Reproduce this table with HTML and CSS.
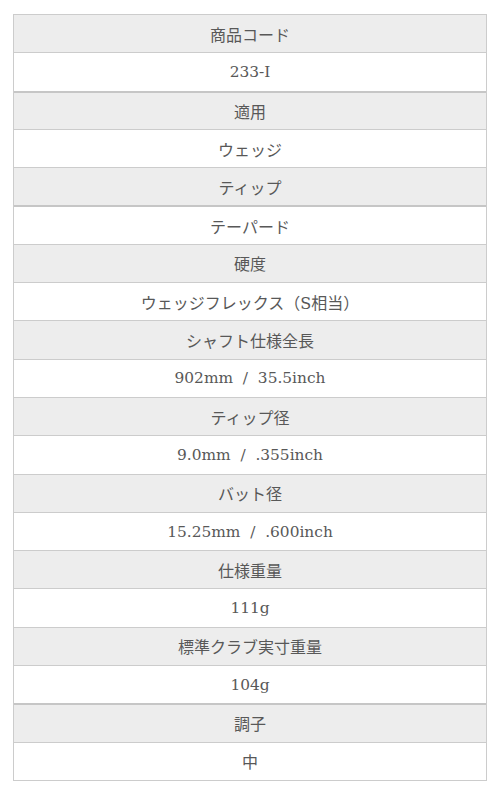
FILE: index.html
```html
<!DOCTYPE html>
<html lang="ja">
<head>
<meta charset="utf-8">
<title>スペック</title>
<link rel="stylesheet" href="styles.css">
</head>
<body>
<div class="spec">
  <div class="row head">商品コード</div>
  <div class="row num">233-I</div>
  <div class="row head thick">適用</div>
  <div class="row">ウェッジ</div>
  <div class="row head">ティップ</div>
  <div class="row thick">テーパード</div>
  <div class="row head">硬度</div>
  <div class="row">ウェッジフレックス（S相当）</div>
  <div class="row head">シャフト仕様全長</div>
  <div class="row num">902mm&nbsp; / &nbsp;35.5inch</div>
  <div class="row head">ティップ径</div>
  <div class="row num">9.0mm&nbsp; / &nbsp;.355inch</div>
  <div class="row head">バット径</div>
  <div class="row num">15.25mm&nbsp; / &nbsp;.600inch</div>
  <div class="row head">仕様重量</div>
  <div class="row num">111g</div>
  <div class="row head">標準クラブ実寸重量</div>
  <div class="row num">104g</div>
  <div class="row head thick">調子</div>
  <div class="row">中</div>
</div>
</body>
</html>
```

FILE: styles.css
```css
html, body {
  margin: 0;
  padding: 0;
  background: #ffffff;
}

body {
  padding: 14px 0 0 13px;
}

.spec {
  width: 472px;
  display: flex;
  flex-direction: column;
  border: 1px solid #cccccc;
  border-top: none;
  font-family: "DejaVu Serif", "Noto Sans CJK JP", serif;
  font-size: 16px;
  color: #585858;
}

.row {
  height: 37.3px;
  display: flex;
  align-items: center;
  justify-content: center;
  border-top: 1px solid #cccccc;
  background: #ffffff;
  white-space: nowrap;
}

.row.num {
  font-size: 15.4px;
}

.row.head {
  background: #ededed;
}

.row.thick {
  border-top: 2px solid #c6c6c6;
  height: 36.3px;
}
```
